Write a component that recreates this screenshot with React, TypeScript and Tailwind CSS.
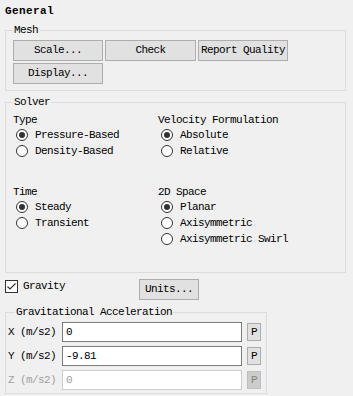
import React from 'react';

const font = { fontFamily: '"Liberation Mono", "Noto Sans CJK SC", monospace' };

function Btn({ label, w }: { label: string; w: string }) {
  return (
    <button
      className={`${w} h-[21px] border border-[#adadad] bg-[#e1e1e1] text-[11px] tracking-[-0.6px] text-black leading-none`}
    >
      {label}
    </button>
  );
}

function Radio({ label, checked }: { label: string; checked?: boolean }) {
  return (
    <div className="flex items-center h-[16px] pl-[3px] gap-[7px]">
      <svg width="12" height="12" viewBox="0 0 12 12" className="shrink-0">
        <circle cx="6" cy="6" r="5.5" fill="#ffffff" stroke="#333333" strokeWidth="1" />
        {checked && <circle cx="6" cy="6" r="3" fill="#333333" />}
      </svg>
      <span>{label}</span>
    </div>
  );
}

function RadioGroup({ title, items, selected }: { title: string; items: string[]; selected: string }) {
  return (
    <div>
      <div className="h-[14px] leading-[14px]">{title}</div>
      {items.map((it) => (
        <Radio key={it} label={it} checked={it === selected} />
      ))}
    </div>
  );
}

function Legend({ children, className = '' }: { children: React.ReactNode; className?: string }) {
  return <legend className={`px-[1px] h-[14px] leading-[14px] ${className}`}>{children}</legend>;
}

function AccelRow({ axis, value, disabled }: { axis: string; value: string; disabled?: boolean }) {
  return (
    <div className="flex items-center h-[20px]">
      <span className={`w-[54px] ${disabled ? 'text-[#a0a0a0]' : ''}`}>{axis} (m/s2)</span>
      <input
        readOnly
        disabled={disabled}
        value={value}
        className={`w-[180px] h-[20px] bg-white px-[3px] text-[11px] tracking-[-0.6px] outline-none border ${
          disabled ? 'border-[#cccccc] text-[#a0a0a0]' : 'border-[#7a7a7a] text-black'
        }`}
        style={font}
      />
      <button
        className={`ml-[5px] w-[14px] h-[18px] border text-[11px] leading-none ${
          disabled ? 'bg-[#cccccc] border-[#bfbfbf] text-[#838383]' : 'bg-[#e1e1e1] border-[#adadad] text-black'
        }`}
        style={font}
      >
        P
      </button>
    </div>
  );
}

export default function App() {
  return (
    <div
      className="w-[353px] h-[396px] overflow-hidden bg-[#f0f0f0] text-black text-[11px] tracking-[-0.6px] pt-[4px] pl-[5px]"
      style={font}
    >
      <div className="h-[14px] leading-[14px] font-bold tracking-[0.4px]">General</div>

      <fieldset className="mt-[5px] w-[341px] border border-[#dcdcdc] pl-[7px] pt-[3px] pb-[6px]">
        <Legend>Mesh</Legend>
        <div className="flex flex-col gap-[2px]">
          <div className="flex gap-[2px]">
            <Btn label="Scale..." w="w-[90px]" />
            <Btn label="Check" w="w-[91px]" />
            <Btn label="Report Quality" w="w-[90px]" />
          </div>
          <Btn label="Display..." w="w-[90px]" />
        </div>
      </fieldset>

      <fieldset className="mt-[4px] w-[341px] border border-[#dcdcdc] pl-[7px] pt-[4px] pb-[25px]">
        <Legend>Solver</Legend>
        <div className="grid grid-cols-[145px_1fr] gap-y-[26px]">
          <RadioGroup title="Type" items={['Pressure-Based', 'Density-Based']} selected="Pressure-Based" />
          <RadioGroup title="Velocity Formulation" items={['Absolute', 'Relative']} selected="Absolute" />
          <RadioGroup title="Time" items={['Steady', 'Transient']} selected="Steady" />
          <RadioGroup title="2D Space" items={['Planar', 'Axisymmetric', 'Axisymmetric Swirl']} selected="Planar" />
        </div>
      </fieldset>

      <div className="mt-[6px] flex items-start">
        <div className="w-[134px] h-[14px] flex items-center gap-[5px]">
          <svg width="13" height="13" viewBox="0 0 13 13" className="shrink-0">
            <rect x="0.5" y="0.5" width="12" height="12" fill="#ffffff" stroke="#333333" />
            <polyline points="2.5,6.5 5,9 10.5,3.5" fill="none" stroke="#333333" strokeWidth="1.2" />
          </svg>
          <span>Gravity</span>
        </div>
        <Btn label="Units..." w="w-[60px]" />
      </div>

      <fieldset className="mt-[5px] w-[262px] border border-[#dcdcdc] pl-[2px] pt-[3px] pb-[3px]">
        <Legend className="ml-[7px]">Gravitational Acceleration</Legend>
        <div className="flex flex-col gap-[4px]">
          <AccelRow axis="X" value="0" />
          <AccelRow axis="Y" value="-9.81" />
          <AccelRow axis="Z" value="0" disabled />
        </div>
      </fieldset>
    </div>
  );
}
